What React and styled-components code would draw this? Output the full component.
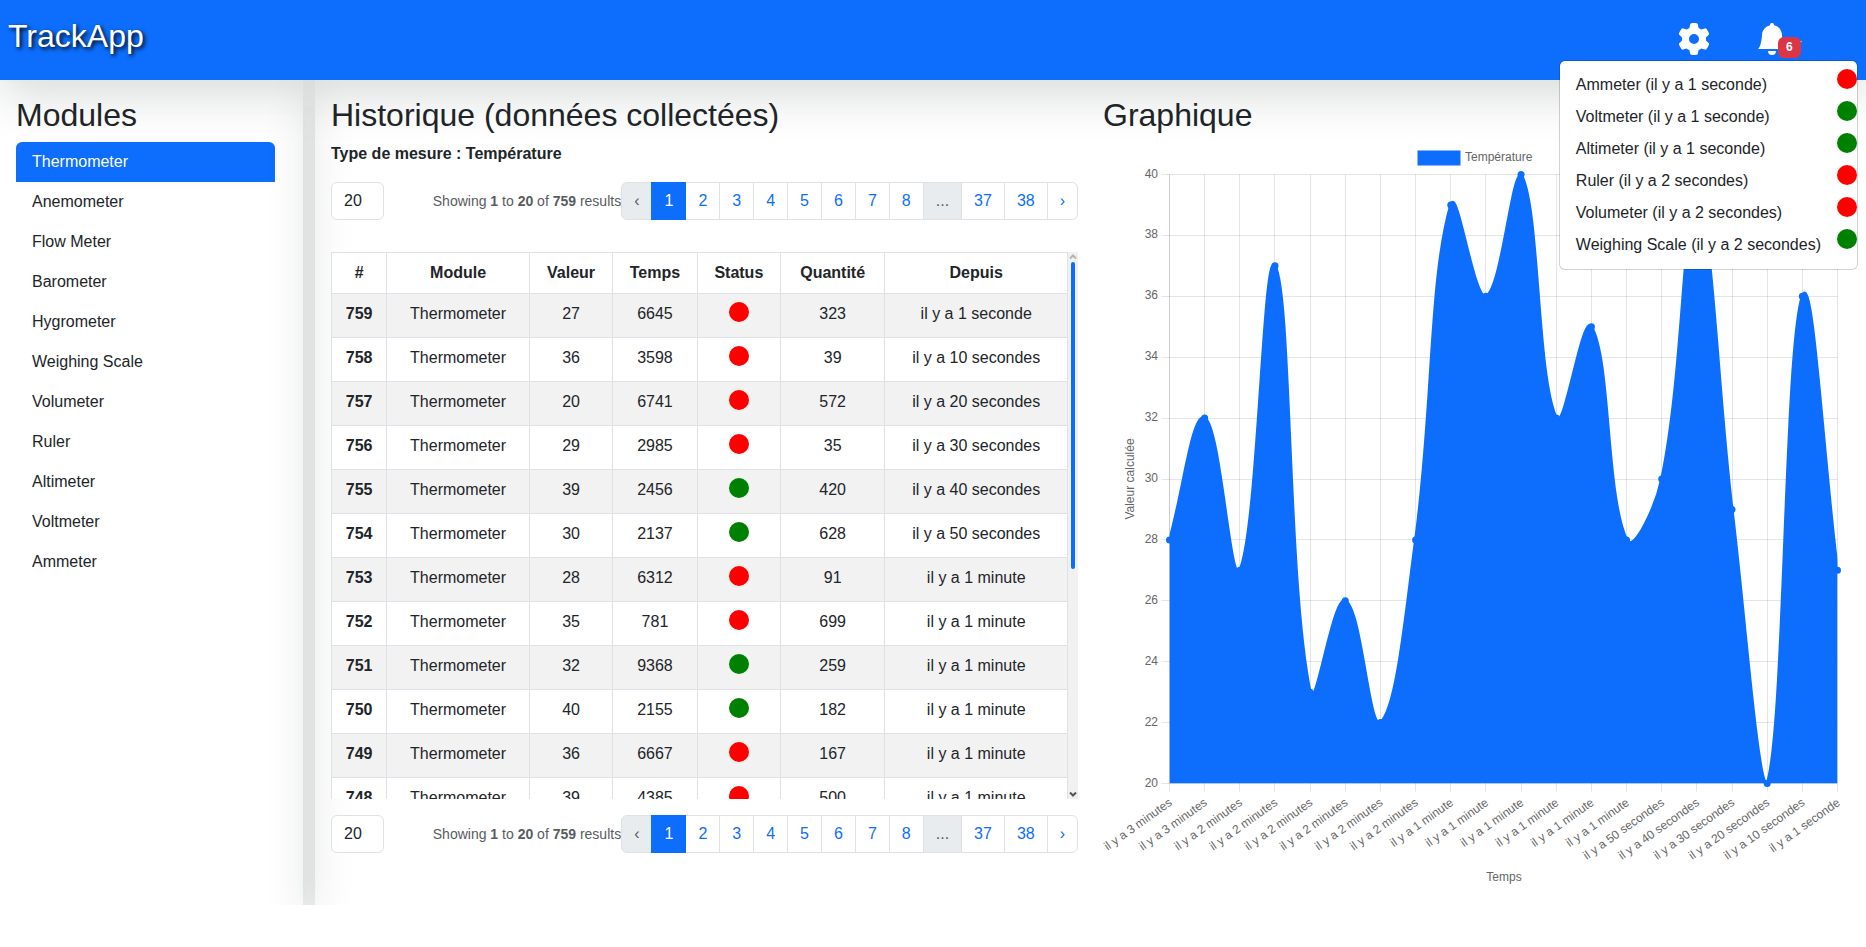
import React from "react";
import styled, { createGlobalStyle, css } from "styled-components";
import { FaGear } from "react-icons/fa6";
import { BsBellFill } from "react-icons/bs";

const primary = "#0d6efd";
const ink = "#212529";
const line = "#dee2e6";
const softShadow = "0 16px 48px rgba(20, 40, 30, 0.16)";

const GlobalStyle = createGlobalStyle`
  *, *::before, *::after { box-sizing: border-box; }
  body {
    margin: 0;
    background: #fff;
    color: ${ink};
    font-family: "Liberation Sans", Arial, sans-serif;
    font-size: 16px;
    line-height: 24px;
  }
`;

const Header = styled.header`
  position: relative;
  z-index: 2;
  display: flex;
  justify-content: space-between;
  height: 80px;
  padding: 12px 64px 0 8px;
  background: ${primary};
  box-shadow: ${softShadow};
`;

const Brand = styled.a`
  color: #fff;
  font-size: 32px;
  line-height: 48px;
  text-decoration: none;
  text-shadow: 2px 2px 4px #000;
`;

const Actions = styled.nav`
  display: flex;
  align-items: flex-start;
  gap: 46px;
  padding-top: 11px;
`;

const IconButton = styled.button`
  position: relative;
  display: flex;
  align-items: center;
  padding: 0;
  border: 0;
  background: none;
  color: #fff;
  font: inherit;
`;

const Caret = styled.span`
  margin: 8px 0 0 4px;
  border: 5px solid transparent;
  border-top-color: #fff;
  border-bottom: 0;
`;

const Badge = styled.span`
  position: absolute;
  left: 22px;
  top: 14px;
  padding: 4px 8px;
  border-radius: 6px;
  background: #dc3545;
  font-size: 12px;
  font-weight: 700;
  line-height: 13px;
`;

const Menu = styled.ul`
  position: absolute;
  top: 60px;
  right: 8px;
  min-width: 299px;
  margin: 0;
  padding: 8px 0;
  list-style: none;
  border: 1px solid rgba(0, 0, 0, 0.175);
  border-radius: 6px;
  background: #fff;
  background-clip: padding-box;
`;

const MenuItem = styled.li`
  display: flex;
  justify-content: space-between;
  height: 32px;
`;

const MenuLink = styled.a`
  padding: 4px 16px;
  color: ${ink};
  text-decoration: none;
  white-space: nowrap;
`;

const Dot = styled.span`
  display: block;
  width: 20px;
  height: 20px;
  flex: none;
  margin: ${(p) => (p.$centered ? "0 auto" : "0")};
  border-radius: 50%;
  background: ${(p) => (p.$on ? "green" : "red")};
`;

const Layout = styled.div`
  display: flex;
  gap: 12px;
  overflow: hidden;
`;

const Sidebar = styled.aside`
  flex: none;
  width: 303px;
  padding: 16px 28px 0 16px;
  box-shadow: ${softShadow};
`;

const Content = styled.main`
  flex: 1;
  min-width: 0;
  display: grid;
  grid-template-columns: minmax(0, 1fr) minmax(0, 1fr);
  gap: 25px;
  padding: 16px 16px 0;
  box-shadow: ${softShadow};
`;

const Title = styled.h2`
  margin: 0 0 8px;
  font-size: 32px;
  font-weight: 400;
  line-height: 38px;
`;

const ModuleList = styled.ul`
  margin: 0;
  padding: 0;
  list-style: none;
  border-radius: 6px;
  background: #fff;
  overflow: hidden;
`;

const ModuleLink = styled.a`
  display: block;
  padding: 8px 16px;
  text-decoration: none;
  color: ${(p) => (p.$active ? "#fff" : ink)};
  background: ${(p) => (p.$active ? primary : "transparent")};
`;

const Measure = styled.p`
  margin: 0 0 16px;
  font-weight: 700;
`;

const PagerRow = styled.div`
  display: flex;
  align-items: center;
`;

const PageSize = styled.input`
  width: 53px;
  height: 38px;
  margin-right: auto;
  padding: 6px 12px;
  border: 1px solid ${line};
  border-radius: 6px;
  background: #fff;
  color: ${ink};
  font: inherit;
`;

const Summary = styled.p`
  margin: 0;
  color: #585c5f;
  font-size: 14px;
  line-height: 21px;
`;

const Pages = styled.ul`
  display: flex;
  margin: 0;
  padding: 0;
  list-style: none;

  li + li { margin-left: -1px; }
  li:first-child > * { border-radius: 6px 0 0 6px; }
  li:last-child > * { border-radius: 0 6px 6px 0; }
`;

const pageCell = css`
  position: relative;
  display: block;
  padding: 6px 12px;
  border: 1px solid ${line};
`;

const PageLink = styled.a`
  ${pageCell}
  text-decoration: none;
  color: ${(p) => (p.$active ? "#fff" : primary)};
  background: ${(p) => (p.$active ? primary : "#fff")};
  border-color: ${(p) => (p.$active ? primary : line)};
  z-index: ${(p) => (p.$active ? 1 : 0)};
`;

const PageOff = styled.span`
  ${pageCell}
  color: #585c5f;
  background: #e9ecef;
`;

const TableFrame = styled.div`
  display: flex;
  height: 547px;
  margin: 32px 0 16px;
`;

const TableView = styled.div`
  flex: 1;
  overflow: hidden;
`;

const Table = styled.table`
  width: 100%;
  table-layout: fixed;
  border-collapse: collapse;
  text-align: center;

  th, td {
    padding: 8px;
    border: 1px solid ${line};
    vertical-align: top;
  }
  tbody tr { height: 44px; }
  tbody tr:nth-child(odd) { background: #f2f2f2; }
  tr { background: #fff; }
`;

const Col = styled.col`
  width: ${(p) => p.$share}%;
`;

const Rail = styled.div`
  display: flex;
  flex-direction: column;
  align-items: center;
  width: 10px;
  background: #f1f1f1;
`;

const Thumb = styled.div`
  width: 4px;
  height: 307px;
  margin-bottom: auto;
  border-radius: 2px;
  background: ${primary};
`;

const ChartSvg = styled.svg`
  display: block;
  width: 100%;
  height: 763px;
  font-size: 12px;
  fill: #666;
`;

const alerts = [
  ["Ammeter (il y a 1 seconde)", false],
  ["Voltmeter (il y a 1 seconde)", true],
  ["Altimeter (il y a 1 seconde)", true],
  ["Ruler (il y a 2 secondes)", false],
  ["Volumeter (il y a 2 secondes)", false],
  ["Weighing Scale (il y a 2 secondes)", true],
];

const modules = [
  "Thermometer", "Anemometer", "Flow Meter", "Barometer", "Hygrometer", "Weighing Scale",
  "Volumeter", "Ruler", "Altimeter", "Voltmeter", "Ammeter",
];

const columns = [
  ["#", 7.5], ["Module", 19.4], ["Valeur", 11.3], ["Temps", 11.5],
  ["Status", 11.3], ["Quantité", 14.2], ["Depuis", 24.8],
];

const rows = [
  [759, 27, 6645, false, 323, "il y a 1 seconde"],
  [758, 36, 3598, false, 39, "il y a 10 secondes"],
  [757, 20, 6741, false, 572, "il y a 20 secondes"],
  [756, 29, 2985, false, 35, "il y a 30 secondes"],
  [755, 39, 2456, true, 420, "il y a 40 secondes"],
  [754, 30, 2137, true, 628, "il y a 50 secondes"],
  [753, 28, 6312, false, 91, "il y a 1 minute"],
  [752, 35, 781, false, 699, "il y a 1 minute"],
  [751, 32, 9368, true, 259, "il y a 1 minute"],
  [750, 40, 2155, true, 182, "il y a 1 minute"],
  [749, 36, 6667, false, 167, "il y a 1 minute"],
  [748, 39, 4385, false, 500, "il y a 1 minute"],
];

const series = [28, 32, 27, 37, 23, 26, 22, 28, 39, 36, 40, 32, 35, 28, 30, 39, 29, 20, 36, 27];
const times = [
  ...Array(2).fill("il y a 3 minutes"),
  ...Array(6).fill("il y a 2 minutes"),
  ...Array(6).fill("il y a 1 minute"),
  "il y a 50 secondes", "il y a 40 secondes", "il y a 30 secondes",
  "il y a 20 secondes", "il y a 10 secondes", "il y a 1 seconde",
];

const plot = { left: 66.5, right: 734.5, top: 32.5, bottom: 641.5 };
const xAt = (i) => plot.left + (i * (plot.right - plot.left)) / (series.length - 1);
const yAt = (v) => plot.bottom - ((v - 20) * (plot.bottom - plot.top)) / 20;
const snap = (n) => Math.floor(n) + 0.5;

// Cardinal spline with tension 0.4, its handles kept inside the plot area.
function splinePath(points) {
  const clampY = (y) => Math.max(plot.top, Math.min(plot.bottom, y));
  const handles = points.map((p, i) => {
    const a = points[i - 1] || p;
    const b = points[i + 1] || p;
    const d1 = Math.hypot(p.x - a.x, p.y - a.y);
    const d2 = Math.hypot(b.x - p.x, b.y - p.y);
    const f1 = (0.4 * d1) / (d1 + d2);
    const f2 = (0.4 * d2) / (d1 + d2);
    return {
      in: [p.x - f1 * (b.x - a.x), clampY(p.y - f1 * (b.y - a.y))],
      out: [p.x + f2 * (b.x - a.x), clampY(p.y + f2 * (b.y - a.y))],
    };
  });
  return points
    .map((p, i) =>
      i === 0
        ? `M${p.x},${p.y}`
        : `C${handles[i - 1].out.join(",")} ${handles[i].in.join(",")} ${p.x},${p.y}`
    )
    .join(" ");
}

function Chart() {
  const points = series.map((v, i) => ({ x: xAt(i), y: yAt(v) }));
  const curve = splinePath(points);
  const levels = Array.from({ length: 11 }, (_, i) => 20 + i * 2);
  return (
    <ChartSvg viewBox="0 0 747 763" preserveAspectRatio="xMinYMin meet" role="img" aria-label="Température">
      <defs>
        <clipPath id="plot-area">
          <rect x={plot.left} y={plot.top - 2} width={plot.right - plot.left} height={plot.bottom - plot.top + 2} />
        </clipPath>
      </defs>
      <rect x="315.5" y="9.5" width="41" height="13" fill={primary} stroke={primary} strokeWidth="2" />
      <text x="362" y="19">Température</text>
      <g stroke="rgba(0,0,0,0.1)">
        {levels.map((v) => (
          <line key={v} x1={plot.left - 8} x2={plot.right} y1={snap(yAt(v))} y2={snap(yAt(v))} />
        ))}
        {points.map((p, i) => (
          <line key={i} x1={snap(p.x)} x2={snap(p.x)} y1={plot.top} y2={plot.bottom + 8} />
        ))}
        <line x1={plot.left} x2={plot.left} y1={plot.top} y2={plot.bottom} />
      </g>
      <g clipPath="url(#plot-area)">
        <path d={`${curve} L${plot.right},${plot.bottom} L${plot.left},${plot.bottom} Z`} fill={primary} />
        <path d={curve} fill="none" stroke={primary} strokeWidth="3" />
      </g>
      <g fill={primary}>
        {points.map((p, i) => <circle key={i} cx={p.x} cy={p.y} r="3.5" />)}
      </g>
      <g textAnchor="end">
        {levels.map((v) => <text key={v} x="55" y={Math.round(yAt(v) + 3)}>{v}</text>)}
        {points.map((p, i) => (
          <text key={i} transform={`translate(${p.x + 1} 659) rotate(-35.5)`} y="4">{times[i]}</text>
        ))}
      </g>
      <g textAnchor="middle">
        <text transform="translate(31 337) rotate(-90)">Valeur calculée</text>
        <text x="401" y="739">Temps</text>
      </g>
    </ChartSvg>
  );
}

function Pager({ id }) {
  return (
    <PagerRow>
      <PageSize id={id} aria-label="Résultats par page" defaultValue="20" />
      <Summary>
        Showing <b>1</b> to <b>20</b> of <b>759</b> results
      </Summary>
      <Pages>
        <li><PageOff>‹</PageOff></li>
        {[1, 2, 3, 4, 5, 6, 7, 8].map((n) => (
          <li key={n}><PageLink href="#" $active={n === 1}>{n}</PageLink></li>
        ))}
        <li><PageOff>...</PageOff></li>
        <li><PageLink href="#">37</PageLink></li>
        <li><PageLink href="#">38</PageLink></li>
        <li><PageLink href="#">›</PageLink></li>
      </Pages>
    </PagerRow>
  );
}

function ScrollRail() {
  return (
    <Rail aria-hidden="true">
      <svg width="10" height="10" viewBox="0 0 10 10"><path d="M2 6.5 5 3.5 8 6.5" fill="none" stroke="#b5b5b5" strokeWidth="2" /></svg>
      <Thumb />
      <svg width="10" height="10" viewBox="0 0 10 10"><path d="M2 3.5 5 6.5 8 3.5" fill="none" stroke="#555" strokeWidth="2" /></svg>
    </Rail>
  );
}

export default function App() {
  return (
    <>
      <GlobalStyle />
      <Header>
        <Brand href="#">TrackApp</Brand>
        <Actions>
          <IconButton aria-label="Paramètres"><FaGear size={32} /></IconButton>
          <IconButton aria-label="Notifications" aria-expanded="true">
            <BsBellFill size={32} />
            <Caret />
            <Badge>6</Badge>
          </IconButton>
        </Actions>
        <Menu>
          {alerts.map(([text, on]) => (
            <MenuItem key={text}>
              <MenuLink href="#">{text}</MenuLink>
              <Dot $on={on} />
            </MenuItem>
          ))}
        </Menu>
      </Header>
      <Layout>
        <Sidebar>
          <Title>Modules</Title>
          <ModuleList>
            {modules.map((name, i) => (
              <li key={name}><ModuleLink href="#" $active={i === 0}>{name}</ModuleLink></li>
            ))}
          </ModuleList>
        </Sidebar>
        <Content>
          <section>
            <Title>Historique (données collectées)</Title>
            <Measure>Type de mesure : Température</Measure>
            <Pager id="size-top" />
            <TableFrame>
              <TableView>
                <Table>
                  <colgroup>
                    {columns.map(([name, share]) => <Col key={name} $share={share} />)}
                  </colgroup>
                  <thead>
                    <tr>{columns.map(([name]) => <th key={name} scope="col">{name}</th>)}</tr>
                  </thead>
                  <tbody>
                    {rows.map(([id, value, time, on, amount, since]) => (
                      <tr key={id}>
                        <th scope="row">{id}</th>
                        <td>Thermometer</td>
                        <td>{value}</td>
                        <td>{time}</td>
                        <td><Dot $on={on} $centered /></td>
                        <td>{amount}</td>
                        <td>{since}</td>
                      </tr>
                    ))}
                  </tbody>
                </Table>
              </TableView>
              <ScrollRail />
            </TableFrame>
            <Pager id="size-bottom" />
          </section>
          <section>
            <Title>Graphique</Title>
            <Chart />
          </section>
        </Content>
      </Layout>
    </>
  );
}
